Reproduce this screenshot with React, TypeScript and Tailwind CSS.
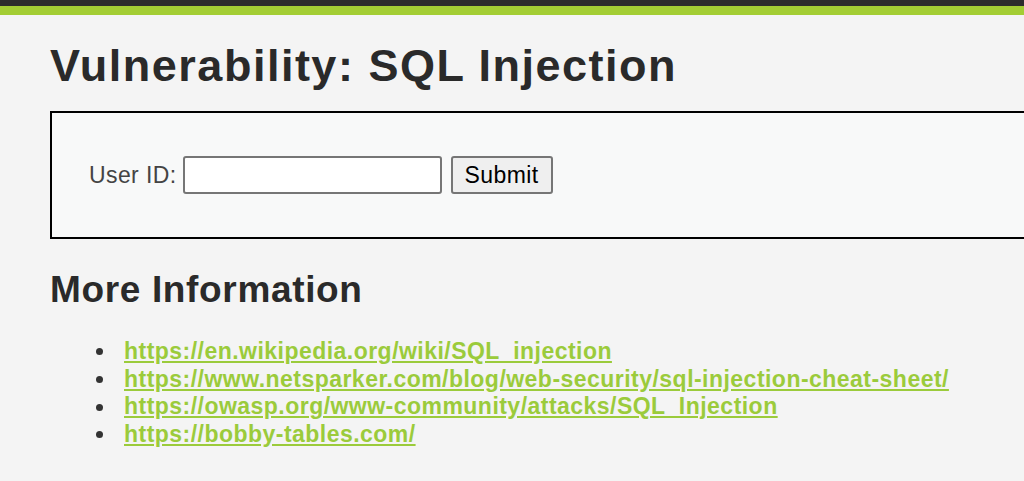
export default function App() {
  const links = [
    "https://en.wikipedia.org/wiki/SQL_injection",
    "https://www.netsparker.com/blog/web-security/sql-injection-cheat-sheet/",
    "https://owasp.org/www-community/attacks/SQL_Injection",
    "https://bobby-tables.com/",
  ];
  return (
    <div className="w-[1024px] h-[481px] overflow-hidden bg-[#f4f4f4]" style={{ fontFamily: '"Liberation Sans", Arial, sans-serif' }}>
      <div className="h-[6px] bg-[#2c2c2c]" />
      <div className="h-[9px] bg-[#a3cd34]" />
      <div className="pl-[50px]">
        <h1 className="mt-[26px] text-[45px] leading-[50px] font-bold tracking-[1.5px] text-[#2a2a2a]">Vulnerability: SQL Injection</h1>
        <div className="mt-[20px] h-[128px] border-2 border-black border-r-0 bg-[#f8f9f9] flex items-center pl-[37px]">
          <span className="text-[23px] tracking-[0.4px] text-[#444]">User ID:</span>
          <input className="ml-[6px] w-[259px] h-[38px] bg-white border-2 border-[#767676] rounded-[3px]" />
          <button className="ml-[9px] w-[102px] h-[38px] bg-[#efefef] border-2 border-[#767676] rounded-[3px] text-[23px] tracking-[0.45px] text-black">Submit</button>
        </div>
        <h2 className="mt-[30px] text-[37px] leading-[42px] font-bold tracking-[0.65px] text-[#2a2a2a]">More Information</h2>
        <ul className="mt-[27px] pl-[46px] text-[23px] leading-[27.7px] font-bold tracking-[0.47px]">
          {links.map((l) => (
            <li key={l} className="flex items-center">
              <span className="w-[7px] h-[7px] rounded-full bg-[#333] mr-[21px] shrink-0" />
              <a href={l} className="text-[#9bcb3b] underline">{l}</a>
            </li>
          ))}
        </ul>
      </div>
    </div>
  );
}
